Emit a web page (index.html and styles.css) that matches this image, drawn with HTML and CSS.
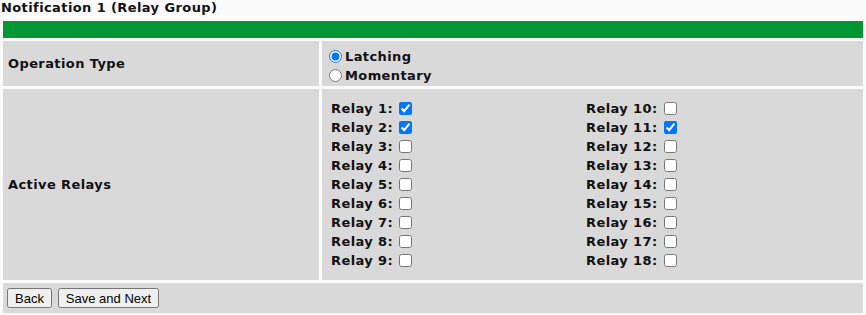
FILE: index.html
```html
<!DOCTYPE html>
<html lang="en">
<head>
    <meta charset="UTF-8">
    <title>Notification 1 (Relay Group)</title>
    <link rel="stylesheet" href="styles.css">
</head>
<body>
    <div class="page-title">Notification 1 (Relay Group)</div>
    <table class="form-table">
        <tr>
            <td class="header" colspan="2"></td>
        </tr>
        <tr>
            <td class="label">Operation Type</td>
            <td class="field radio-field">
                <label><input type="radio" name="optype" checked>Latching</label>
                <label><input type="radio" name="optype">Momentary</label>
            </td>
        </tr>
        <tr>
            <td class="label">Active Relays</td>
            <td class="field relay-field">
                <div class="relay-grid">
                    <div class="relay-col">
                        <label>Relay 1: <input type="checkbox" checked></label>
                        <label>Relay 2: <input type="checkbox" checked></label>
                        <label>Relay 3: <input type="checkbox"></label>
                        <label>Relay 4: <input type="checkbox"></label>
                        <label>Relay 5: <input type="checkbox"></label>
                        <label>Relay 6: <input type="checkbox"></label>
                        <label>Relay 7: <input type="checkbox"></label>
                        <label>Relay 8: <input type="checkbox"></label>
                        <label>Relay 9: <input type="checkbox"></label>
                    </div>
                    <div class="relay-col">
                        <label>Relay 10: <input type="checkbox"></label>
                        <label>Relay 11: <input type="checkbox" checked></label>
                        <label>Relay 12: <input type="checkbox"></label>
                        <label>Relay 13: <input type="checkbox"></label>
                        <label>Relay 14: <input type="checkbox"></label>
                        <label>Relay 15: <input type="checkbox"></label>
                        <label>Relay 16: <input type="checkbox"></label>
                        <label>Relay 17: <input type="checkbox"></label>
                        <label>Relay 18: <input type="checkbox"></label>
                    </div>
                </div>
            </td>
        </tr>
        <tr>
            <td class="buttons" colspan="2">
                <button type="button">Back</button>
                <button type="button">Save and Next</button>
            </td>
        </tr>
    </table>
</body>
</html>
```

FILE: styles.css
```css
body {
    margin: 0;
    background-color: #fbfbfb;
    font-family: "DejaVu Sans", Verdana, sans-serif;
    font-size: 13px;
    font-weight: bold;
    letter-spacing: 0.4px;
    color: #111;
}
.page-title {
    padding: 0 1px;
    height: 18px;
    line-height: 15px;
}
.form-table {
    width: 100%;
    border-spacing: 3px;
    border-collapse: separate;
}
.form-table td {
    background-color: #d9d9d9;
    padding: 0;
}
.form-table td.header {
    background-color: #039733;
    height: 17px;
}
.label {
    width: 311px;
    padding-left: 5px !important;
    vertical-align: middle;
}
.radio-field {
    height: 41px;
    padding: 4px 0 0 7px !important;
}
.radio-field label {
    display: flex;
    align-items: center;
    height: 19px;
}
.radio-field input {
    margin: 0 3px 0 0;
    width: 13px;
    height: 13px;
}
.relay-field {
    height: 191px;
    padding: 0 0 0 9px !important;
}
.relay-grid {
    display: grid;
    grid-template-columns: 255px 1fr;
}
.relay-col label {
    display: flex;
    align-items: center;
    height: 19px;
}
.relay-col input {
    margin: 0 0 0 6px;
    width: 13px;
    height: 13px;
}
.buttons {
    height: 30px;
    padding-left: 4px !important;
}
.buttons button {
    font-family: "Liberation Sans", Arial, sans-serif;
    font-size: 13px;
    font-weight: normal;
    letter-spacing: 0;
    padding: 1px 6px;
    margin: 0 1px 0 0;
    height: 20px;
}
```
